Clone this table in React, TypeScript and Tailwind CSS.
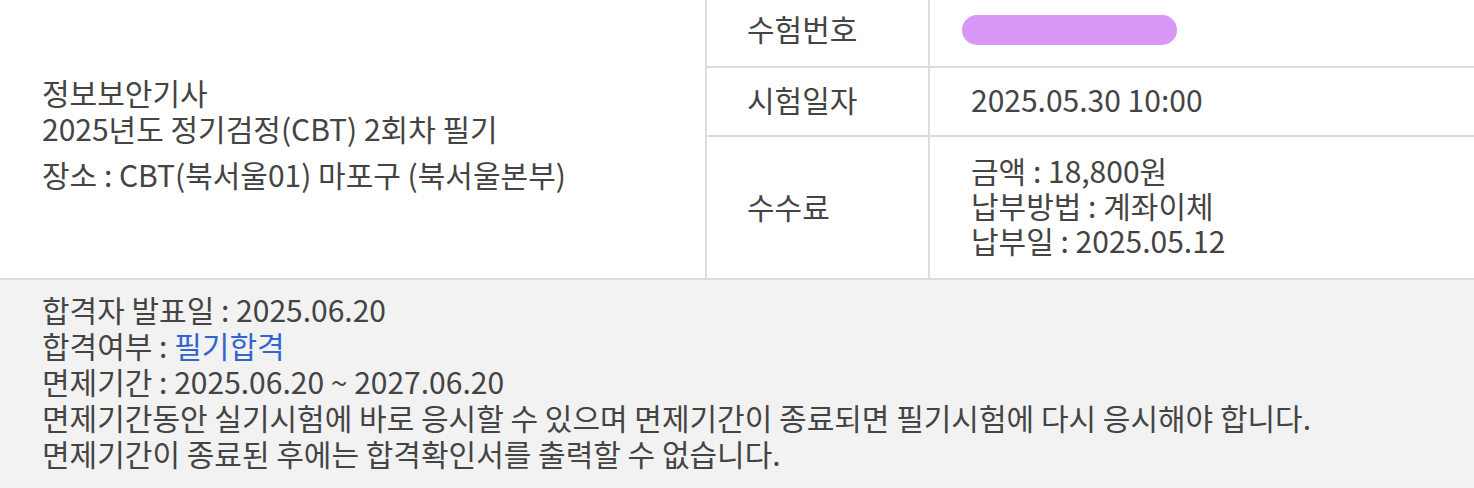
export default function App() {
  return (
    <div
      className="w-[1474px] h-[488px] bg-white text-[#444] text-[30px] leading-[36.5px] overflow-hidden"
      style={{ fontFamily: '"Noto Sans CJK KR", "Noto Sans", sans-serif' }}
    >
      {/* Exam info table */}
      <div className="flex h-[280px] border-b-2 border-[#ddd]">
        <div className="w-[707px] border-r-2 border-[#ddd] flex flex-col justify-center pl-[42px] pb-[12px]">
          <p>
            정보보안기사
            <br />
            2025년도 정기검정(CBT) 2회차 필기
          </p>
          <p className="mt-[9px]">장소 : CBT(북서울01) 마포구 (북서울본부)</p>
        </div>
        <div className="flex-1 flex flex-col">
          <div className="flex h-[68px] border-b-2 border-[#ddd]">
            <div className="w-[223px] border-r-2 border-[#ddd] flex items-center pl-[40px] pb-[9px]">수험번호</div>
            <div className="flex-1 flex items-start pl-[32px] pt-[15px]">
              <div className="w-[215px] h-[30px] rounded-full bg-[#d898f7]" />
            </div>
          </div>
          <div className="flex h-[69px] border-b-2 border-[#ddd]">
            <div className="w-[223px] border-r-2 border-[#ddd] flex items-center pl-[40px] pb-[5px]">시험일자</div>
            <div className="flex-1 flex items-center pl-[41px] pb-[5px]">2025.05.30 10:00</div>
          </div>
          <div className="flex flex-1">
            <div className="w-[223px] border-r-2 border-[#ddd] flex items-center pl-[40px] pb-[2px]">수수료</div>
            <div className="flex-1 flex flex-col justify-center pl-[41px] pb-[4px] leading-[35px]">
              <div>금액 : 18,800원</div>
              <div>납부방법 : 계좌이체</div>
              <div>납부일 : 2025.05.12</div>
            </div>
          </div>
        </div>
      </div>

      {/* Result notice */}
      <div className="bg-[#f2f2f2] h-[208px] pl-[42px] pt-[11px] leading-[36px]">
        <div>합격자 발표일 : 2025.06.20</div>
        <div>
          합격여부 : <span className="text-[#3366cc]">필기합격</span>
        </div>
        <div>면제기간 : 2025.06.20 ~ 2027.06.20</div>
        <div>면제기간동안 실기시험에 바로 응시할 수 있으며 면제기간이 종료되면 필기시험에 다시 응시해야 합니다.</div>
        <div>면제기간이 종료된 후에는 합격확인서를 출력할 수 없습니다.</div>
      </div>
    </div>
  );
}
